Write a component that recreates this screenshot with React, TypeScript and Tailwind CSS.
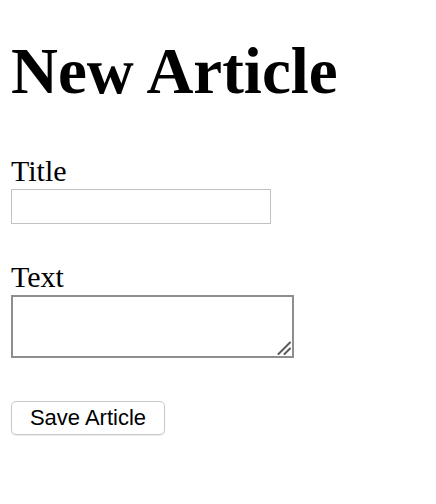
import React from 'react';

function ResizeGrip() {
  return (
    <svg
      className="pointer-events-none absolute bottom-[3px] right-[3px]"
      width="14"
      height="14"
      viewBox="0 0 14 14"
    >
      <path d="M1.5 13 L13 1.5" stroke="#5a5a5a" strokeWidth="2" strokeLinecap="round" />
      <path d="M7.5 13 L13 7.5" stroke="#5a5a5a" strokeWidth="2" strokeLinecap="round" />
    </svg>
  );
}

export default function App() {
  return (
    <div className="min-h-[504px] bg-white pl-[11px] text-black">
      <h1 className="pt-[39px] font-['Liberation_Serif',serif] text-[65px] font-bold leading-[64px]">
        New Article
      </h1>
      <form className="flex flex-col items-start font-['Liberation_Serif',serif]">
        <label htmlFor="title" className="mt-[53px] text-[30px] leading-[30px]">
          Title
        </label>
        <input
          id="title"
          type="text"
          className="mt-[3px] h-[35px] w-[260px] border border-[#c2c2c2] bg-white outline-none"
        />
        <label htmlFor="text" className="mt-[38px] text-[30px] leading-[30px]">
          Text
        </label>
        <div className="relative mt-[3px] h-[63px] w-[283px]">
          <textarea
            id="text"
            className="block h-full w-full resize-none border-2 border-[#8e8e8e] bg-white outline-none"
          />
          <ResizeGrip />
        </div>
        <button
          type="button"
          className="mt-[43px] h-[34px] w-[154px] rounded-[5px] border border-[#c8c8c8] bg-white font-['Liberation_Sans',sans-serif] text-[22px] leading-none shadow-[0_1px_1px_rgba(0,0,0,0.08)]"
        >
          Save Article
        </button>
      </form>
    </div>
  );
}
